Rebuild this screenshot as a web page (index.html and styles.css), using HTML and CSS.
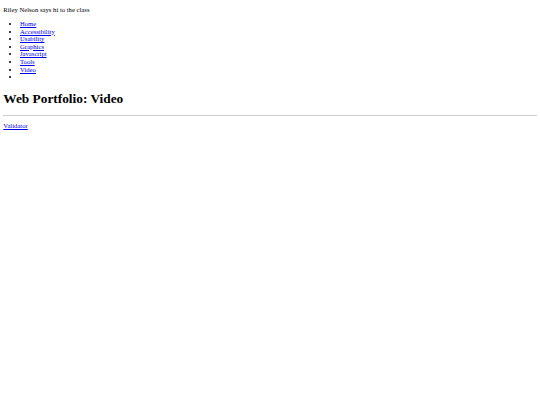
FILE: index.html
```html
<!DOCTYPE html>
<html lang="en">
<head>
<meta charset="utf-8">
<title>Web Portfolio: Video</title>
<link rel="stylesheet" href="styles.css">
</head>
<body>
<p class="greeting">Riley Nelson says hi to the class</p>
<ul class="nav">
  <li><a href="#">Home</a></li>
  <li><a href="#">Accessibility</a></li>
  <li><a href="#">Usability</a></li>
  <li><a href="#">Graphics</a></li>
  <li><a href="#">Javascript</a></li>
  <li><a href="#">Tools</a></li>
  <li><a href="#">Video</a></li>
  <li></li>
</ul>
<h1 class="title">Web Portfolio: Video</h1>
<hr class="rule">
<p class="footer"><a href="#">Validator</a></p>
</body>
</html>
```
FILE: styles.css
```css
html {
  background: #ffffff;
}
body {
  margin: 0;
  padding: 6.2px 3.33px 3.33px;
  font-family: "Liberation Serif", "Times New Roman", serif;
  font-size: 6.67px;
  line-height: 7.65px;
  color: #000000;
}
a {
  color: #0000ee;
  text-decoration: underline;
}
.greeting {
  margin: 0 0 6px;
}
.nav {
  margin: 6px 0 10px;
  padding-left: 16.67px;
  list-style: disc;
}
.title {
  font-size: 13.33px;
  line-height: 15.4px;
  font-weight: bold;
  margin: 10px 0 8.2px;
}
.rule {
  margin: 0;
  border: none;
  border-top: 1px solid #cfcfcf;
  height: 0;
}
.footer {
  margin: 6px 0;
}
```
